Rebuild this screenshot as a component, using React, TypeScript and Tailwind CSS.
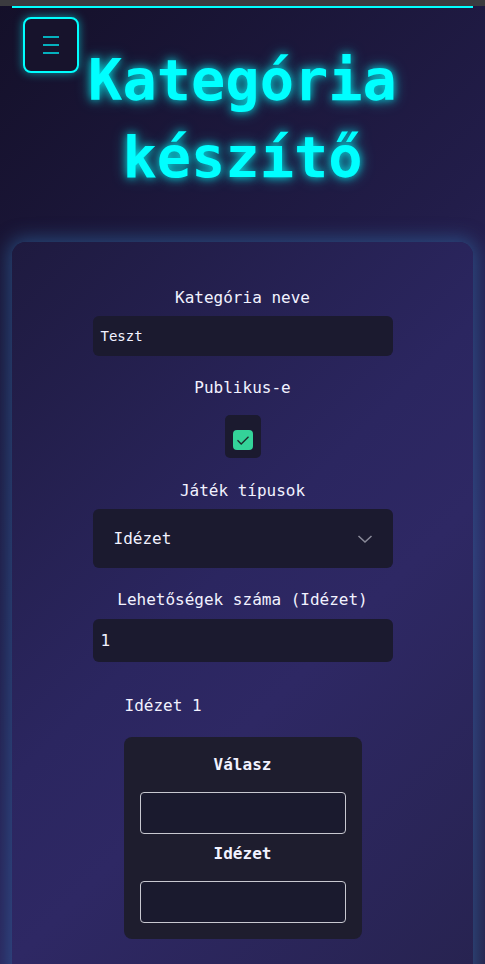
import React from "react";

const mono = { fontFamily: '"DejaVu Sans Mono", "Liberation Mono", monospace' };

function Label({ children, bold = false }: { children: React.ReactNode; bold?: boolean }) {
  return (
    <div className={`text-center text-[16px] leading-[24px] text-[#f2f2ff] ${bold ? "font-bold" : ""}`}>
      {children}
    </div>
  );
}

export default function App() {
  return (
    <div
      className="min-h-screen w-full bg-[linear-gradient(135deg,#141029_0%,#221d4a_45%,#2d2760_70%,#262148_100%)] text-white"
      style={mono}
    >
      <div className="h-[6px] bg-[#3b3b3f]" />
      <div className="px-[12px]">
        <div className="h-[2px] bg-[#00ffff]" />
      </div>
      <div className="relative">
        <button className="absolute left-[23px] top-[9px] flex h-[56px] w-[56px] items-center justify-center rounded-[8px] border-2 border-[#00ffff] bg-[#17132c] shadow-[0_0_10px_rgba(0,255,255,0.55)]">
          <svg width="18" height="18" viewBox="0 0 18 18">
            <path d="M1 1h16M1 9h16M1 17h16" stroke="#00e5ee" strokeWidth="1.5" />
          </svg>
        </button>
        <h1 className="pt-[34px] text-center text-[57px] font-bold leading-[77px] text-[#00ffff] [text-shadow:0_0_8px_rgba(0,255,255,0.8),0_0_16px_rgba(0,255,255,0.4)]">
          Kategória
          <br />
          készítő
        </h1>
      </div>
      <div className="px-[12px] pt-[46px]">
        <div className="min-h-[740px] rounded-t-[14px] bg-[linear-gradient(135deg,#1e1a3f_0%,#2b2660_45%,#2e2864_60%,#272350_100%)] pt-[44px] shadow-[0_0_18px_4px_rgba(50,110,170,0.55)]">
          <div className="mx-auto flex w-[300px] flex-col items-stretch">
            <Label>Kategória neve</Label>
            <div className="mt-[6px] flex h-[40px] items-center rounded-[6px] bg-[#1b1a2f] px-[8px] text-[14px] text-[#f2f2ff]">
              Teszt
            </div>
            <div className="mt-[20px]">
              <Label>Publikus-e</Label>
            </div>
            <div className="mt-[15px] flex justify-center">
              <div className="h-[43px] w-[36px] rounded-[5px] bg-[#1b1a2f] pl-[8px] pt-[15px]">
                <div className="flex h-[20px] w-[20px] items-center justify-center rounded-[4px] bg-[#34d399]">
                  <svg width="16" height="16" viewBox="0 0 16 16">
                    <path d="M2.5 8.3l3.7 3.7 7.3-7.3" fill="none" stroke="#1b2a2a" strokeWidth="1.3" />
                  </svg>
                </div>
              </div>
            </div>
            <div className="mt-[21px]">
              <Label>Játék típusok</Label>
            </div>
            <div className="mt-[6px] flex h-[59px] items-center justify-between rounded-[6px] bg-[#1b1a2f] pl-[21px] pr-[20px] text-[16px] text-[#f2f2ff]">
              <span>Idézet</span>
              <svg width="16" height="10" viewBox="0 0 16 10">
                <path d="M1.5 2l6.5 6 6.5-6" fill="none" stroke="#8a8a99" strokeWidth="1.5" />
              </svg>
            </div>
            <div className="mt-[20px]">
              <Label>Lehetőségek száma (Idézet)</Label>
            </div>
            <div className="mt-[7px] flex h-[43px] items-center rounded-[6px] bg-[#1b1a2f] px-[8px] text-[16px] text-[#f2f2ff]">
              1
            </div>
          </div>
          <div className="mx-auto mt-[32px] w-[238px]">
            <div className="pl-[1px] text-[16px] leading-[24px] text-[#f2f2ff]">Idézet 1</div>
            <div className="mt-[19px] rounded-[8px] bg-[#1e1d2e] px-[16px] py-[16px]">
              <Label bold>Válasz</Label>
              <div className="mt-[15px] h-[42px] rounded-[4px] border border-[#c8c8d0] bg-[#1a1a2e]" />
              <div className="mt-[8px]">
                <Label bold>Idézet</Label>
              </div>
              <div className="mt-[15px] h-[42px] rounded-[4px] border border-[#c8c8d0] bg-[#1a1a2e]" />
            </div>
          </div>
        </div>
      </div>
    </div>
  );
}
